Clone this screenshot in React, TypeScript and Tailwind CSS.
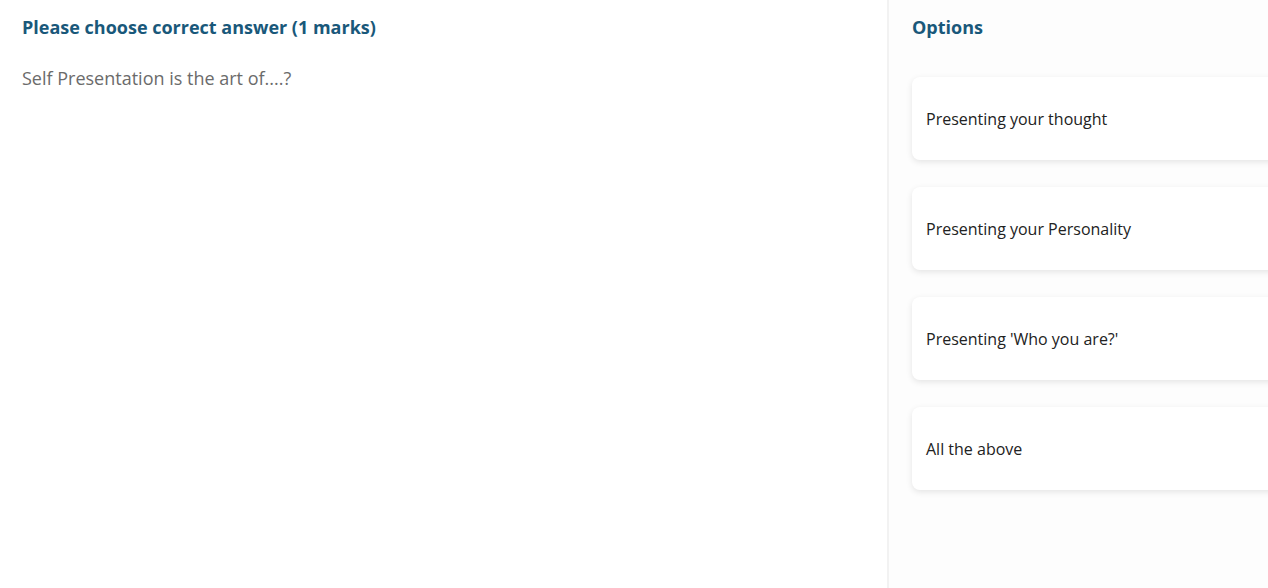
const OPTIONS = [
  "Presenting your thought",
  "Presenting your Personality",
  "Presenting 'Who you are?'",
  "All the above",
];

export default function App() {
  return (
    <div className="flex h-[588px] w-full overflow-hidden bg-white font-['Open_Sans',sans-serif]">
      {/* Question */}
      <div className="w-[887px] shrink-0 pl-[22px] pt-[15px]">
        <h2 className="text-[18px] font-bold leading-6 text-[#19587a]">
          Please choose correct answer (1 marks)
        </h2>
        <p className="mt-[27px] text-[18px] leading-6 text-[#6b6b6b]">
          Self Presentation is the art of....?
        </p>
      </div>

      {/* Options */}
      <div className="w-[420px] shrink-0 border-l-2 border-[#f2f2f2] bg-[#fdfdfd] pl-[23px] pt-[15px]">
        <h3 className="text-[18px] font-bold leading-6 text-[#19587a]">Options</h3>
        <div className="mt-[38px] flex flex-col gap-[27px]">
          {OPTIONS.map((text) => (
            <div
              key={text}
              className="flex h-[83px] items-center rounded-lg bg-white px-[14px] text-[16px] text-[#222] shadow-[0_2px_6px_rgba(0,0,0,0.1)]"
            >
              {text}
            </div>
          ))}
        </div>
      </div>
    </div>
  );
}
